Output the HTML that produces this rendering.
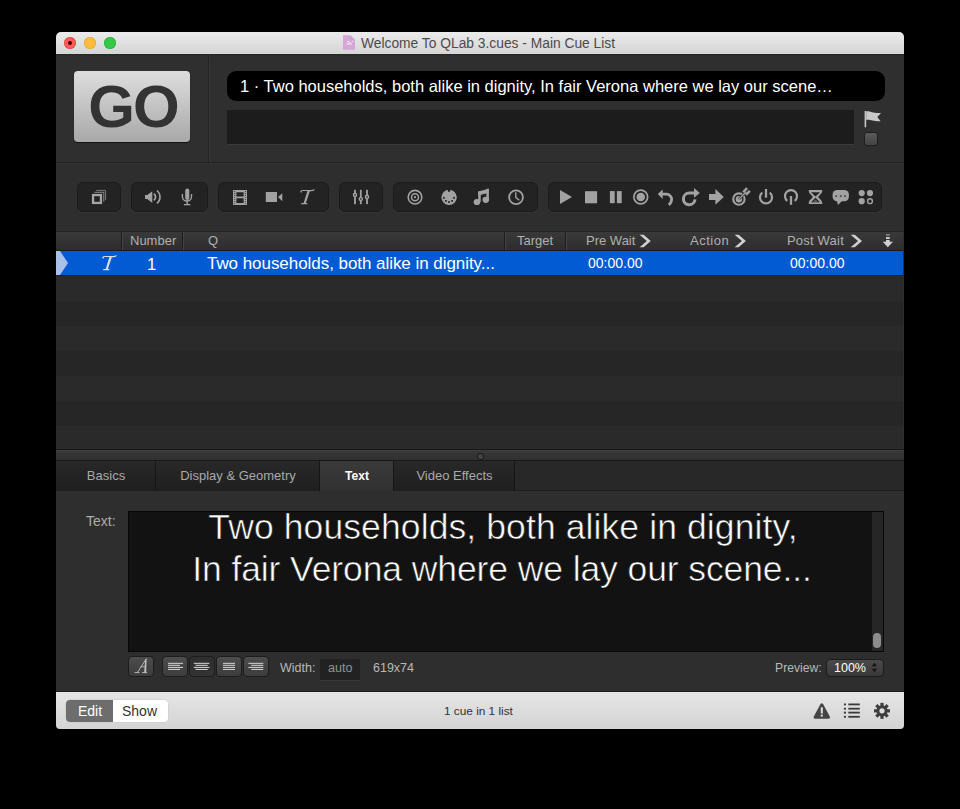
<!DOCTYPE html>
<html><head><meta charset="utf-8">
<style>
html,body{margin:0;padding:0;}
body{width:960px;height:809px;background:#000;position:relative;overflow:hidden;font-family:"Liberation Sans",sans-serif;}
.a{position:absolute;}
#win{left:56px;top:32px;width:848px;height:697px;background:#2e2e2e;border-radius:5px 5px 4px 4px;}
#title{left:56px;top:32px;width:848px;height:22px;background:linear-gradient(#ebebeb,#d5d5d5);border-radius:5px 5px 0 0;}
.tl{top:37px;width:12px;height:12px;border-radius:50%;}
#ttext{left:361px;top:36px;font-size:13.8px;color:#4b4b4b;white-space:nowrap;}
#topbar{left:56px;top:54px;width:848px;height:108px;background:linear-gradient(#272727,#2f2f2f 3px);}
#go{left:74px;top:71px;width:116px;height:71px;border-radius:4px;background:linear-gradient(#dedede,#a8a8a8);box-shadow:0 1px 1px rgba(0,0,0,.6);}
#gotext{left:1px;top:0px;letter-spacing:-2px;width:116px;height:71px;line-height:71px;text-align:center;font-size:60px;font-weight:bold;color:#333;}
#vsep{left:208px;top:54px;width:1px;height:108px;background:#222;box-shadow:1px 0 0 #393939;}
#cuename{left:227px;top:71px;width:658px;height:30px;border-radius:9px;background:#000;}
#cuetext{left:240px;top:77px;font-size:16.5px;color:#fff;white-space:nowrap;}
#notes{left:227px;top:110px;width:627px;height:34px;background:#1c1c1c;box-shadow:0 1px 0 #3a3a3a;}
#hsep{left:56px;top:162px;width:848px;height:1px;background:#1f1f1f;box-shadow:0 1px 0 #363636;}
#toolbar{left:56px;top:163px;width:848px;height:68px;background:linear-gradient(#353535 0,#353535 1px,#2e2e2e 1px);}
.grp{top:182px;height:28px;background:#232323;border-radius:6px;border:1px solid #1b1b1b;box-shadow:0 1px 0 rgba(255,255,255,.04);}
#header{left:56px;top:231px;width:847px;height:19px;background:linear-gradient(#3a3a3a,#2d2d2d);box-shadow:inset 0 1px 0 #242424;border-bottom:1px solid #1c1c1c;}
.h{top:233px;font-size:13px;color:#b0b0b0;white-space:nowrap;}
.hs{top:232px;width:1px;height:18px;background:#1c1c1c;box-shadow:1px 0 0 #444;}
.st{left:56px;width:847px;height:25px;}
#sel{left:56px;top:251px;width:847px;height:24px;background:#035bd3;}
.r{top:255px;font-size:14px;color:#fff;white-space:nowrap;}
#splitter{left:56px;top:449px;width:848px;height:10px;background:linear-gradient(#3f3f3f,#363636 30%,#303030);border-top:1px solid #1a1a1a;border-bottom:1px solid #181818;}
#tabbar{left:56px;top:461px;width:848px;height:29px;background:#282828;border-bottom:1px solid #1f1f1f;}
.tab{top:461px;height:30px;background:linear-gradient(#282828,#1f1f1f);font-size:13px;color:#a9a9a9;line-height:30px;text-align:center;box-shadow:inset -1px 0 0 #151515;}
#insp{left:56px;top:491px;width:847px;height:200px;background:#2e2e2e;}
#textarea{left:128px;top:511px;width:754px;height:139px;background:#121212;border:1px solid #070707;}
#track{left:872px;top:512px;width:11px;height:139px;background:#262626;}
#thumb{left:873px;top:633px;width:8px;height:15px;background:#8c8c8c;border-radius:4px;}
.big{font-size:35.5px;color:#fff;white-space:nowrap;-webkit-text-stroke:.6px #121212;}
.btn{top:657px;height:19px;border-radius:4px;background:linear-gradient(#4d4d4d,#3c3c3c);border:1px solid #1d1d1d;box-sizing:border-box;}
.lbl{font-size:12.5px;color:#b8b8b8;white-space:nowrap;}
#bottom{left:56px;top:691px;width:848px;height:38px;background:linear-gradient(#e6e6e6,#d3d3d3);border-radius:0 0 4px 4px;box-shadow:inset 0 1px 0 #1c1c1c;}
</style></head><body>
<div id="win" class="a"></div>
<div id="title" class="a"></div>
<div class="a tl" style="left:64px;background:#fc5b57;box-shadow:inset 0 0 0 .6px #e0443e"></div>
<div class="a" style="left:68px;top:41px;width:4px;height:4px;border-radius:50%;background:#4d0000"></div>
<div class="a tl" style="left:84px;background:#fdbc40;box-shadow:inset 0 0 0 .6px #dea236"></div>
<div class="a tl" style="left:104px;background:#34c84a;box-shadow:inset 0 0 0 .6px #27aa35"></div>
<div id="ttext" class="a">Welcome To QLab 3.cues - Main Cue List</div>

<div id="topbar" class="a"></div>
<div id="go" class="a"><div id="gotext" class="a">GO</div></div>
<div id="vsep" class="a"></div>
<div id="cuename" class="a"></div>
<div id="cuetext" class="a">1 · Two households, both alike in dignity, In fair Verona where we lay our scene…</div>
<div id="notes" class="a"></div>
<div class="a" style="left:864px;top:132px;width:14px;height:14px;border-radius:3px;background:linear-gradient(#5a5a5a,#444);border:1px solid #1e1e1e;box-sizing:border-box;"></div>

<div id="hsep" class="a"></div>
<div id="toolbar" class="a"></div>
<div class="a grp" style="left:77px;width:42px;"></div>
<div class="a grp" style="left:131px;width:75px;"></div>
<div class="a grp" style="left:218px;width:109px;"></div>
<div class="a grp" style="left:339px;width:42px;"></div>
<div class="a grp" style="left:393px;width:143px;"></div>
<div class="a grp" style="left:548px;width:332px;"></div>

<div id="header" class="a"></div>
<div class="a hs" style="left:121px"></div>
<div class="a hs" style="left:182px"></div>
<div class="a hs" style="left:504px"></div>
<div class="a hs" style="left:565px"></div>
<div class="a h" style="left:130px">Number</div>
<div class="a h" style="left:208px">Q</div>
<div class="a h" style="left:517px">Target</div>
<div class="a h" style="left:586px">Pre Wait</div>
<div class="a h" style="left:690px;letter-spacing:.5px">Action</div>
<div class="a h" style="left:787px;letter-spacing:.2px">Post Wait</div>

<div id="sel" class="a"></div>
<div class="a st" style="top:275px;height:1px;background:#212121"></div>
<div class="a st" style="top:276px;background:#2a2a2a"></div>
<div class="a st" style="top:301px;background:#262626"></div>
<div class="a st" style="top:326px;background:#2a2a2a"></div>
<div class="a st" style="top:351px;background:#262626"></div>
<div class="a st" style="top:376px;background:#2a2a2a"></div>
<div class="a st" style="top:401px;background:#262626"></div>
<div class="a st" style="top:426px;height:23px;background:#2a2a2a"></div>
<div class="a r" style="left:147px;top:255px;font-size:16.5px">1</div>
<div class="a r" style="left:207px;top:254px;font-size:17px;letter-spacing:-.05px">Two households, both alike in dignity...</div>
<div class="a r" style="left:588px">00:00.00</div>
<div class="a r" style="left:790px">00:00.00</div>

<div id="splitter" class="a"></div>
<div class="a" style="left:478px;top:453.5px;width:5px;height:5px;border-radius:50%;background:#444;box-shadow:0 0 0 1px #1c1c1c;"></div>
<div id="tabbar" class="a"></div>
<div class="a tab" style="left:56px;width:100px">Basics</div>
<div class="a tab" style="left:156px;width:164px">Display &amp; Geometry</div>
<div class="a tab" style="left:320px;width:74px;background:linear-gradient(#3a3a3a,#313131);color:#fff;font-weight:bold;font-size:12px">Text</div>
<div class="a tab" style="left:394px;width:121px">Video Effects</div>

<div id="insp" class="a"></div>
<div class="a lbl" style="left:86px;top:513px;font-size:14px;color:#acacac">Text:</div>
<div id="textarea" class="a"></div>
<div id="track" class="a"></div>
<div id="thumb" class="a"></div>
<div class="a big" style="left:131px;width:744px;text-align:center;top:507px;letter-spacing:.1px">Two households, both alike in dignity,</div>
<div class="a big" style="left:130px;width:744px;text-align:center;top:549px;letter-spacing:-.1px">In fair Verona where we lay our scene...</div>

<div class="a btn" style="left:128px;top:656px;width:26px;height:21px"></div>
<div class="a btn" style="left:162px;top:656px;width:26px;height:21px"></div>
<div class="a btn" style="left:189px;top:656px;width:26px;height:21px;background:linear-gradient(#2e2e2e,#333)"></div>
<div class="a btn" style="left:216px;top:656px;width:26px;height:21px"></div>
<div class="a btn" style="left:243px;top:656px;width:26px;height:21px"></div>
<div class="a lbl" style="left:280px;top:661px">Width:</div>
<div class="a" style="left:320px;top:659px;width:40px;height:21px;background:#222;box-shadow:0 1px 0 #383838;"></div>
<div class="a lbl" style="left:328px;top:661px;color:#949494">auto</div>
<div class="a lbl" style="left:373px;top:661px">619x74</div>
<div class="a lbl" style="left:775px;top:661px;font-size:12.2px">Preview:</div>
<div class="a" style="left:826px;top:659px;width:58px;height:18px;border-radius:4px;background:linear-gradient(#4a4a4a,#383838);border:1px solid #1c1c1c;box-sizing:border-box;"></div>
<div class="a lbl" style="left:834px;top:661px;color:#fff">100%</div>

<div id="bottom" class="a"></div>
<div class="a" style="left:66px;top:700px;width:102px;height:22px;border-radius:4px;background:#fff;box-shadow:0 0 0 .5px #c8c8c8;"></div>
<div class="a" style="left:66px;top:700px;width:47px;height:22px;border-radius:4px 0 0 4px;background:#6d6d6d;"></div>
<div class="a" style="left:78px;top:703px;font-size:14px;color:#fff">Edit</div>
<div class="a" style="left:122px;top:703px;font-size:14px;color:#333">Show</div>
<div class="a" style="left:444px;top:704px;font-size:11.8px;color:#333">1 cue in 1 list</div>

<svg class="a" style="left:0;top:0" width="960" height="809" viewBox="0 0 960 809">
<g fill="#a2a2a2" stroke="none">
<!-- G1 group -->
<rect x="93.05" y="195.05" width="7.9" height="7.9" fill="none" stroke="#a6a6a6" stroke-width="2.3"/>
<path d="M94.3 192.3H103.8V201.8" fill="none" stroke="#8c8c8c" stroke-width="1"/>
<path d="M96.3 190.4H105.6V199.9" fill="none" stroke="#7c7c7c" stroke-width="1"/>
<!-- speaker -->
<path d="M145 195H147.2L152.3 191.2V202.9L147.2 199.1H145Z"/>
<path d="M153.8 193.7A4 4 0 0 1 153.8 200.3" fill="none" stroke="#a2a2a2" stroke-width="1.8"/>
<path d="M156.97 190.5A8.5 8.5 0 0 1 156.97 203.5" fill="none" stroke="#a2a2a2" stroke-width="1.6"/>
<!-- mic -->
<rect x="185.2" y="188.6" width="4.1" height="11.4" rx="2.05"/>
<path d="M182.4 193.9V196.5A4.55 4.55 0 0 0 191.5 196.5V193.9M187.2 201V204.2" fill="none" stroke="#a2a2a2" stroke-width="1.4"/>
<rect x="184" y="204" width="6.3" height="1.3"/>
<!-- film -->
<path fill-rule="evenodd" d="M233 190H247V205H233Z M236.4 192.2H243.6V196.6H236.4Z M236.4 198.2H243.6V202.9H236.4Z"/>
<g fill="#3a3a3a"><circle cx="234.7" cy="191.4" r=".55"/><circle cx="234.7" cy="193.4" r=".55"/><circle cx="234.7" cy="195.4" r=".55"/><circle cx="234.7" cy="197.5" r=".55"/><circle cx="234.7" cy="199.5" r=".55"/><circle cx="234.7" cy="201.5" r=".55"/><circle cx="234.7" cy="203.5" r=".55"/>
<circle cx="245.4" cy="191.4" r=".55"/><circle cx="245.4" cy="193.4" r=".55"/><circle cx="245.4" cy="195.4" r=".55"/><circle cx="245.4" cy="197.5" r=".55"/><circle cx="245.4" cy="199.5" r=".55"/><circle cx="245.4" cy="201.5" r=".55"/><circle cx="245.4" cy="203.5" r=".55"/></g>
<!-- camera -->
<rect x="265.8" y="192" width="11.2" height="10"/>
<path d="M278 197L282.3 193.2V201.3Z"/>
<!-- mixer -->
<rect x="354.1" y="189.8" width="1.8" height="14.4"/><rect x="359.9" y="189.8" width="1.8" height="14.4"/><rect x="366.1" y="189.8" width="1.8" height="14.4"/>
<rect x="352.9" y="193.1" width="4.2" height="3.6" rx=".8"/><rect x="358.7" y="197.2" width="4.2" height="3.6" rx=".8"/><rect x="364.9" y="195.1" width="4.2" height="3.6" rx=".8"/>
<g fill="#232323"><rect x="354.3" y="194.2" width="1.4" height="1.4"/><rect x="360.1" y="198.3" width="1.4" height="1.4"/><rect x="366.3" y="196.2" width="1.4" height="1.4"/></g>
<!-- concentric target -->
<circle cx="415" cy="197.2" r="6.8" fill="none" stroke="#a2a2a2" stroke-width="1.6"/>
<circle cx="415" cy="197.2" r="3.5" fill="none" stroke="#a2a2a2" stroke-width="1.5"/>
<circle cx="415" cy="197.2" r="1.1"/>
<!-- DMX -->
<circle cx="449.1" cy="197.35" r="7.7"/>
<g fill="#2a2a2a"><rect x="447.9" y="188.8" width="2.3" height="2.9" fill="#202020"/><rect x="443" y="196.9" width="1.8" height="1.8"/><rect x="445" y="200" width="1.8" height="1.8"/><rect x="448.1" y="201.1" width="1.8" height="1.8"/><rect x="451.2" y="200" width="1.8" height="1.8"/><rect x="453.1" y="196.9" width="1.8" height="1.8"/></g>
<!-- music -->
<ellipse cx="476.9" cy="202" rx="3.3" ry="3.1"/><ellipse cx="485.8" cy="199.8" rx="3.3" ry="3.1"/>
<rect x="478.2" y="191.6" width="2.5" height="10.4"/><rect x="486.4" y="188.8" width="2.5" height="11"/>
<path d="M478.2 191.6L488.9 188.8V192.8L478.2 195.4Z"/>
<!-- clock -->
<circle cx="516.05" cy="197.2" r="6.9" fill="none" stroke="#a2a2a2" stroke-width="1.8"/>
<path d="M515.8 192.2V197.3L519.3 200.2" fill="none" stroke="#a2a2a2" stroke-width="1.4"/>
<!-- play stop pause record -->
<path d="M560 190.1L572 197L560 203.9Z"/>
<rect x="585" y="191.2" width="12.1" height="12.1"/>
<rect x="609.9" y="191.1" width="4.8" height="12.1"/><rect x="616.9" y="191.1" width="4.8" height="12.1"/>
<circle cx="640.75" cy="197.05" r="6.9" fill="none" stroke="#a2a2a2" stroke-width="1.7"/>
<circle cx="640.75" cy="197.05" r="4.3"/>
<!-- undo -->
<path d="M657.8 194.1L662.6 189.4V199Z"/>
<path d="M661.5 194.2H666.5A5.1 5.1 0 0 1 671.6 199.3C671.6 201.4 670.6 203.3 668.8 204.8" fill="none" stroke="#a2a2a2" stroke-width="2.8"/>
<!-- redo -->
<path d="M695 199.3A5.8 5.8 0 1 1 689.2 193.1H694.5" fill="none" stroke="#a2a2a2" stroke-width="3"/>
<path d="M694 188L699.8 192.9L694 197.7Z"/>
<!-- arrow right -->
<path d="M709 194.1H715.4V189.1L723.8 197L715.4 204.8V200H709Z"/>
<!-- target dart -->
<circle cx="738.9" cy="199.1" r="5.7" fill="none" stroke="#a2a2a2" stroke-width="2.1"/>
<circle cx="738.9" cy="199.2" r="3.2"/>
<path d="M738.9 199.2L746.3 191.8" stroke="#232323" stroke-width="2.6"/>
<path d="M738.9 199.2L746.3 191.8" stroke="#a2a2a2" stroke-width="1.3"/>
<g transform="translate(746.35 191.7) rotate(-45)"><rect x="-2.6" y="-3.2" width="5.6" height="2.5"/><rect x="-2.6" y=".7" width="5.6" height="2.5"/></g>
<!-- power -->
<path d="M762.3 192.6A6 6 0 1 0 769.7 192.6" fill="none" stroke="#a2a2a2" stroke-width="2.2"/>
<rect x="764.85" y="189" width="2.3" height="8.7"/>
<!-- loop -->
<path d="M787.3 200.9A6 6 0 1 1 794.7 200.9" fill="none" stroke="#a2a2a2" stroke-width="2.2"/>
<rect x="789.85" y="196" width="2.3" height="8.8"/>
<!-- hourglass -->
<path fill-rule="evenodd" d="M808.8 190H822.2V191.6C822.2 193.5 819 195.5 818.2 197.1C819 198.7 822.2 200.6 822.2 202.3V203.9H808.8V202.3C808.8 200.6 812 198.7 812.8 197.1C812 195.5 808.8 193.5 808.8 191.6Z M811 192.2H820L815.5 196.5Z M815.5 197.7L820 202.3H811Z"/>
<path d="M815.5 199.4L818.5 202.3H812.5Z" fill="#5a5a5a"/>
<!-- speech -->
<rect x="832.6" y="190" width="16.3" height="11.2" rx="4.5"/>
<path d="M836.5 200L838 205L843 200Z"/>
<g fill="#464646"><rect x="835.3" y="195.3" width="1.7" height="1.7"/><rect x="839.9" y="195.3" width="1.7" height="1.7"/><rect x="844.2" y="195.3" width="1.7" height="1.7"/></g>
<!-- dots -->
<circle cx="861.7" cy="193.1" r="3.1"/><circle cx="870" cy="193.1" r="3.1"/><circle cx="861.7" cy="201.2" r="3.1"/>
<circle cx="870" cy="201.2" r="2.4" fill="none" stroke="#a2a2a2" stroke-width="1.4"/>
</g>
<!-- doc icon -->
<path d="M343 35.2H350.3L355 39.9V49.8H343Z" fill="#d6a7d6"/>
<path d="M350.3 35.2V39.9H355" fill="#c9a0d0"/>
<path d="M347 41.5H349M349 42.5H350.5M346.5 44H352M352 41.5H353" stroke="#f4eef4" stroke-width="1"/>
<!-- T icons -->
<g fill="#a4a4a4"><path d="M300.2 191.6C300.6 190.2 302.5 189.9 305 190C308 190.1 311.5 190.2 313.6 189.5L314.9 189.2C314.6 190.5 313.5 191.1 311.5 191.2C308.5 191.3 305 191.1 302.5 191.1C301.9 191.2 301.7 191.5 301.8 192.2C301.6 193 300.4 192.8 300.2 191.6Z M307.5 190.8L310 190.8L305.7 203.5L303.5 203.5Z M301.2 203.1H307.3V204.2H301.2Z"/></g>
<g fill="#dcdcdc" transform="translate(-198 66)"><path d="M300.2 191.6C300.6 190.2 302.5 189.9 305 190C308 190.1 311.5 190.2 313.6 189.5L314.9 189.2C314.6 190.5 313.5 191.1 311.5 191.2C308.5 191.3 305 191.1 302.5 191.1C301.9 191.2 301.7 191.5 301.8 192.2C301.6 193 300.4 192.8 300.2 191.6Z M307.5 190.8L310 190.8L305.7 203.5L303.5 203.5Z M301.2 203.1H307.3V204.2H301.2Z"/></g>
<!-- header chevrons -->
<g fill="#d0d0d0">
<path d="M639.6 234.7H643.6L650.8 241L643.6 247.3H639.6L646.8 241Z"/>
<path d="M734.6 234.7H738.6L745.9 241L738.6 247.3H734.6L741.9 241Z"/>
<path d="M850.7 234.7H854.7L862 241L854.7 247.3H850.7L858 241Z"/>
<rect x="886" y="234.1" width="3.7" height="1.6" fill="#8a8a8a"/>
<rect x="886" y="237" width="3.7" height="2" fill="#c8c8c8"/>
<rect x="886" y="240" width="3.7" height="2.2"/>
<path d="M882.7 241.7H893L887.85 247.3Z"/>
</g>
<!-- selected row indicator -->
<path d="M56 251H60L68 263L60 275H56Z" fill="#a9c0e8"/>
<!-- flag -->
<rect x="864.6" y="111" width="1.6" height="16.3" fill="#c5c5c5"/>
<path d="M866.2 111.3C870 110.8 873 113.6 881 113L877.3 116.9L880.6 121.3C873 121.6 870 119 866.2 119.9Z" fill="#c8c8c8"/>
<!-- bottom icons -->
<path d="M821.8 703.2C822.4 703.2 822.8 703.6 823.2 704.2L829.8 716.4C830.3 717.4 829.8 718.7 828.6 718.7H815C813.8 718.7 813.3 717.4 813.8 716.4L820.4 704.2C820.8 703.6 821.2 703.2 821.8 703.2Z" fill="#454545"/>
<rect x="820.8" y="707.3" width="2" height="6.2" fill="#e0e0e0"/>
<rect x="820.8" y="714.6" width="2" height="2" fill="#e0e0e0"/>
<g fill="#3a3a3a">
<rect x="843.9" y="703.5" width="2.1" height="1.8"/><rect x="848.3" y="703.5" width="11.5" height="1.8"/>
<rect x="843.9" y="707.8" width="2.1" height="1.8"/><rect x="848.3" y="707.8" width="11.5" height="1.8"/>
<rect x="843.9" y="711.7" width="2.1" height="1.8"/><rect x="848.3" y="711.7" width="11.5" height="1.8"/>
<rect x="843.9" y="715.9" width="2.1" height="1.8"/><rect x="848.3" y="715.9" width="11.5" height="1.8"/>
</g>
<g transform="translate(882 710.85)" fill="#3e3e3e">
<circle r="5.6"/>
<rect x="-1.6" y="-8" width="3.2" height="16"/><rect x="-8" y="-1.6" width="16" height="3.2"/>
<rect x="-1.6" y="-8" width="3.2" height="16" transform="rotate(45)"/><rect x="-1.6" y="-8" width="3.2" height="16" transform="rotate(-45)"/>
<circle r="2.6" fill="#dcdcdc"/>
</g>
<!-- A -->
<g fill="#c4c4c4">
<path d="M137.6 672.3L146.3 658.8" stroke="#c4c4c4" stroke-width=".9" fill="none"/>
<path d="M145.2 659.6L146.5 658.6L146.2 672.5H144.2Z"/>
<rect x="140.6" y="666.4" width="4.8" height=".8"/>
<rect x="134.6" y="672.2" width="4.9" height=".9"/><rect x="142" y="672.2" width="5.1" height=".9"/>
</g>
<!-- align icons -->
<g fill="#c9c9c9">
<rect x="168" y="662.8" width="15" height="1.1"/><rect x="168" y="664.8" width="12" height="1.1"/><rect x="168" y="666.9" width="15" height="1.1"/><rect x="168" y="668.9" width="12" height="1.1"/>
<rect x="193.8" y="662.8" width="15.6" height="1.1"/><rect x="195.5" y="664.8" width="12.2" height="1.1"/><rect x="193.8" y="666.9" width="15.6" height="1.1"/><rect x="195.5" y="668.9" width="12.2" height="1.1"/>
<rect x="223" y="662.8" width="12" height="1.1"/><rect x="223" y="664.8" width="12" height="1.1"/><rect x="223" y="666.9" width="12" height="1.1"/><rect x="223" y="668.9" width="12" height="1.1"/>
<rect x="248.4" y="662.8" width="14.9" height="1.1"/><rect x="251.3" y="664.8" width="12" height="1.1"/><rect x="248.4" y="666.9" width="14.9" height="1.1"/><rect x="251.3" y="668.9" width="12" height="1.1"/>
</g>
<!-- popup stepper -->
<path d="M871.8 666.2L874.4 662.8L877 666.2Z M871.8 668.8L874.4 672.2L877 668.8Z" fill="#141414"/>
</svg>
</body></html>
